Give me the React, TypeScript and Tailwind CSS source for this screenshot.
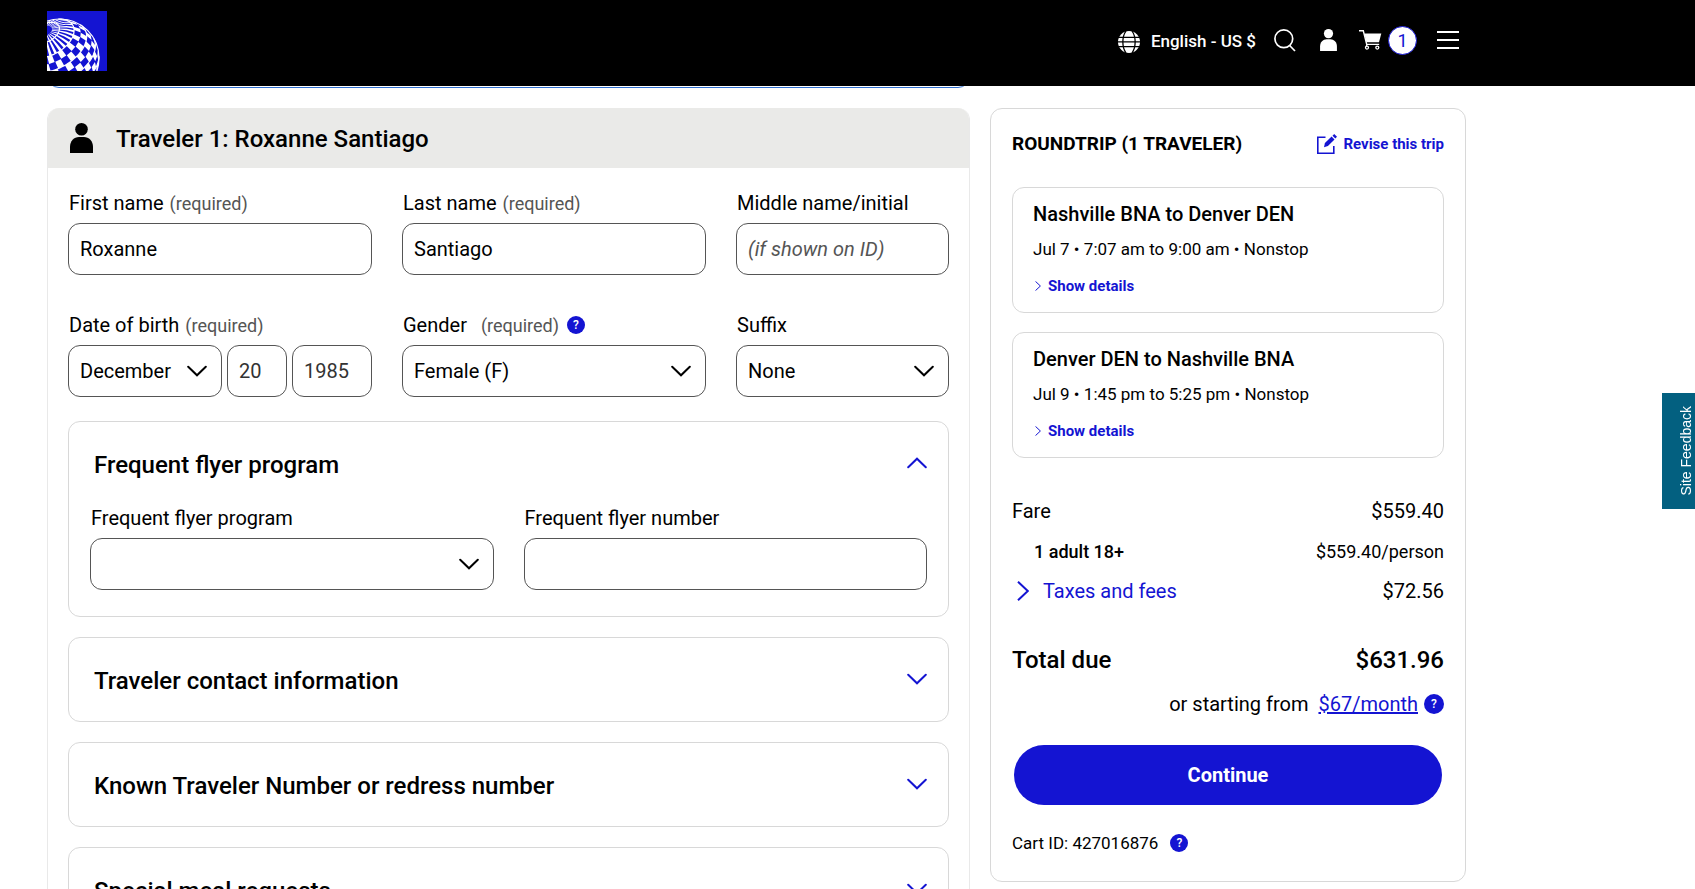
import * as React from "react";

/* ---------- Logo ---------- */

const GLOBE = { cx: 13, cy: 47, r: 39 };
const POLE_TILT = (53 * Math.PI) / 180;
const POLE_AZIMUTH = Math.atan2(-27, -15);
const BAND = 22;
const STEP = 24;

// Orthographic projection of a point given by its distance from the pole and its longitude
function project(colat: number, lon: number) {
  const c = (colat * Math.PI) / 180;
  const l = (lon * Math.PI) / 180;
  const a = Math.sin(c) * Math.cos(l);
  const b = Math.sin(c) * Math.sin(l);
  const n = Math.cos(c);
  const along = n * Math.sin(POLE_TILT) + a * Math.cos(POLE_TILT);
  const depth = n * Math.cos(POLE_TILT) - a * Math.sin(POLE_TILT);
  const x = GLOBE.cx + GLOBE.r * (along * Math.cos(POLE_AZIMUTH) - b * Math.sin(POLE_AZIMUTH));
  const y = GLOBE.cy + GLOBE.r * (along * Math.sin(POLE_AZIMUTH) + b * Math.cos(POLE_AZIMUTH));
  return { x, y, depth };
}

function buildCells() {
  let d = "";
  for (let row = 1; row < 12; row++) {
    const top = (row * BAND) / 2;
    const bottom = top + BAND / 2;
    // Rows close to the pole are made of narrow bars, the others alternate
    const step = row < 4 ? STEP / 2 : STEP;
    const width = row < 4 ? step / 2 : step * 0.45;
    for (let lon = 0; lon < 360; lon += step) {
      const start = lon + (row > 3 && row % 2 ? step / 2 : 0);
      const corners = [
        project(top, start),
        project(top, start + width),
        project(bottom, start + width),
        project(bottom, start),
      ];
      if (corners.some((p) => p.depth < 0)) continue;
      d += "M" + corners.map((p) => `${p.x.toFixed(2)} ${p.y.toFixed(2)}`).join("L") + "Z";
    }
  }
  return d;
}

function buildParallels() {
  let d = "";
  for (let colat = BAND; colat < 140; colat += BAND) {
    let pen = false;
    for (let lon = 0; lon <= 360; lon += 4) {
      const p = project(colat, lon);
      if (p.depth < 0) {
        pen = false;
        continue;
      }
      d += `${pen ? "L" : "M"}${p.x.toFixed(2)} ${p.y.toFixed(2)}`;
      pen = true;
    }
  }
  return d;
}

const CELLS = buildCells();
const PARALLELS = buildParallels();

function Logo() {
  return (
    <svg viewBox="0 0 60 60" className="size-[60px]" aria-label="Home">
      <rect width="60" height="60" fill="#1414d2" />
      <circle cx={GLOBE.cx} cy={GLOBE.cy} r={GLOBE.r} fill="none" stroke="#fff" strokeWidth="1.2" />
      <path d={CELLS} fill="#fff" />
      <path d={PARALLELS} fill="none" stroke="#fff" strokeWidth="1.2" />
    </svg>
  );
}

/* ---------- Icons ---------- */

function PersonIcon({ className }: { className: string }) {
  return (
    <svg viewBox="0 0 23 30" className={className} fill="currentColor" aria-hidden="true">
      <circle cx="11.5" cy="6.3" r="6.3" />
      <path d="M0 30V24C0 18 4 14 9 14h5c5 0 9 4 9 10v6z" />
    </svg>
  );
}

function GlobeIcon() {
  return (
    <svg viewBox="0 0 22 22" className="size-[22px]" aria-hidden="true">
      <circle cx="11" cy="11" r="11" fill="#fff" />
      <g fill="none" stroke="#000" strokeWidth="1.3">
        <path d="M0 6.3h22M0 10.9h22M0 15.6h22" />
        <path d="M8 0C3.8 6 3.8 16 8 22M14 0c4.200 6 4.200 16 0 22" />
      </g>
    </svg>
  );
}

function SearchIcon() {
  return (
    <svg viewBox="0 0 22 23" className="h-[23px] w-[22px]" fill="none" stroke="#fff" strokeWidth="1.700" aria-hidden="true">
      <circle cx="9.800" cy="9.800" r="8.900" />
      <path d="M15.600 16.500l5.400 5.500" />
    </svg>
  );
}

function CartIcon() {
  return (
    <svg viewBox="0 0 23 20" className="h-5 w-[23px]" fill="none" stroke="#fff" aria-hidden="true">
      <path d="M0 .8h4.300l3.400 13.600h12.500" strokeWidth="1.400" />
      <path d="M5.300 3.500h17l-2.300 8.700H7.400z" fill="#fff" stroke="none" />
      <path d="M8 14.500l-.8 2" strokeWidth="1.200" />
      <circle cx="8" cy="17.600" r="1.500" strokeWidth="1.300" />
      <circle cx="18.300" cy="17.600" r="1.500" strokeWidth="1.300" />
    </svg>
  );
}

function EditIcon() {
  return (
    <svg viewBox="0 0 20 20" className="size-5" fill="none" stroke="currentColor" aria-hidden="true">
      <path d="M8.500 3.300H.8v15.900h16v-7.300" strokeWidth="1.600" />
      <path d="M7 13.200l.9-4.100 6.700-6.500 2.900 2.900-6.600 6.600z" fill="currentColor" stroke="none" />
      <path d="M15.500 1.700L17.200 0 20 2.800l-1.700 1.700z" fill="currentColor" stroke="none" />
    </svg>
  );
}

function Chevron({ up = false, className }: { up?: boolean; className: string }) {
  return (
    <svg viewBox="0 0 20 12" className={className} fill="none" stroke="currentColor" strokeWidth="2" strokeLinecap="round" aria-hidden="true">
      <path d={up ? "M1.200 10.300L10 1.700l8.800 8.600" : "M1.200 1.700L10 10.300l8.800-8.600"} />
    </svg>
  );
}

function ChevronRight({ className }: { className: string }) {
  return (
    <svg viewBox="0 0 12 20" className={className} fill="none" stroke="currentColor" strokeWidth="2" aria-hidden="true">
      <path d="M1 .8L10.800 10 1 19.200" />
    </svg>
  );
}

function HelpButton({ label, large = false }: { label: string; large?: boolean }) {
  return (
    <button
      type="button"
      aria-label={label}
      className={`flex shrink-0 items-center justify-center rounded-full bg-[#1414d2] text-[12px] leading-none font-medium text-white ${
        large ? "size-5" : "size-[18px]"
      }`}
    >
      ?
    </button>
  );
}

/* ---------- Form parts ---------- */

const controlClass =
  "h-[52px] w-full min-w-0 appearance-none rounded-xl border border-[#555] bg-white px-[11px] text-[20px] outline-none placeholder:text-[#555] placeholder:italic";

interface FieldProps {
  id: string;
  label: string;
  required?: boolean;
  help?: string;
  children: React.ReactNode;
}

function Field({ id, label, required, help, children }: FieldProps) {
  return (
    <div className="min-w-0">
      <div className="mb-[5px] flex h-[30px] items-center gap-2 pl-px">
        <label htmlFor={id} className="text-[20px]">
          {label}
          {required && (
            <span className={`text-[18px] text-[#555] ${help ? "ml-[14px]" : "ml-[6px]"}`}>(required)</span>
          )}
        </label>
        {help && <HelpButton label={help} />}
      </div>
      {children}
    </div>
  );
}

function Select({ id, value }: { id: string; value: string }) {
  return (
    <div className="relative min-w-0">
      <select id={id} defaultValue={value} className={controlClass}>
        <option value={value}>{value}</option>
      </select>
      <Chevron className="pointer-events-none absolute top-5 right-[15px] h-3 w-5" />
    </div>
  );
}

interface SectionProps {
  title: string;
  children?: React.ReactNode;
}

function Section({ title, children }: SectionProps) {
  const open = Boolean(children);
  return (
    <section className="rounded-xl border border-[#d8d8d8]">
      <h3>
        <button
          type="button"
          aria-expanded={open}
          className={`flex w-full items-center justify-between pt-[26px] pr-[21px] pl-[25px] text-left text-[24px] leading-[35px] font-medium ${
            open ? "pb-5" : "pb-[22px]"
          }`}
        >
          {title}
          <Chevron up={open} className="mb-[6px] h-3 w-5 text-[#1414d2]" />
        </button>
      </h3>
      {children}
    </section>
  );
}

/* ---------- Trip summary ---------- */

const flights = [
  { route: "Nashville BNA to Denver DEN", info: "Jul 7 • 7:07 am to 9:00 am • Nonstop" },
  { route: "Denver DEN to Nashville BNA", info: "Jul 9 • 1:45 pm to 5:25 pm • Nonstop" },
];

function TripSummary() {
  return (
    <aside className="rounded-xl border border-[#d8d8d8] px-[21px] pt-[21px] pb-[26px]">
      <div className="flex items-center justify-between leading-7">
        <h2 className="text-[19px] font-bold">ROUNDTRIP (1 TRAVELER)</h2>
        <a href="#revise" className="flex items-center gap-[6px] text-[15px] font-bold text-[#1414d2]">
          <EditIcon />
          Revise this trip
        </a>
      </div>

      <div className="mt-[29px] flex flex-col gap-[19px]">
        {flights.map((flight) => (
          <section key={flight.route} className="rounded-xl border border-[#d8d8d8] px-5 pt-3 pb-[14px]">
            <h3 className="text-[20px] leading-7 font-medium">{flight.route}</h3>
            <p className="mt-[9px] text-[17px] leading-6">{flight.info}</p>
            <button type="button" className="mt-[13px] flex items-center gap-[7px] pl-[2px] text-[15px] leading-6 font-bold text-[#1414d2]">
              <ChevronRight className="h-[10px] w-[6px]" />
              Show details
            </button>
          </section>
        ))}
      </div>

      <div className="mt-[39px] flex justify-between text-[20px] leading-7">
        <span>Fare</span>
        <span>$559.40</span>
      </div>
      <div className="mt-[15px] flex justify-between pl-[22px] text-[18px] leading-6">
        <span className="font-medium">1 adult 18+</span>
        <span>$559.40/person</span>
      </div>
      <div className="mt-[13px] flex justify-between text-[20px] leading-7">
        <button type="button" className="flex items-center gap-[14px] pl-[5px] text-[#1414d2]">
          <ChevronRight className="h-5 w-3" />
          Taxes and fees
        </button>
        <span>$72.56</span>
      </div>
      <div className="mt-[37px] flex justify-between text-[24px] leading-9 font-medium">
        <span>Total due</span>
        <span>$631.96</span>
      </div>
      <div className="mt-3 flex items-center justify-end text-[20px] leading-7">
        <span>or starting from</span>
        <a href="#monthly" className="mr-[6px] ml-[10px] text-[#1414d2] underline">
          $67/month
        </a>
        <HelpButton label="About monthly payments" large />
      </div>

      <div className="mt-[27px] px-[2px]">
        <button type="button" className="h-[60px] w-full rounded-full bg-[#1414d2] text-[20px] font-bold text-white">
          Continue
        </button>
      </div>

      <div className="mt-[26px] flex items-center gap-3 text-[17px] leading-6">
        <span>Cart ID: 427016876</span>
        <HelpButton label="About the cart ID" />
      </div>
    </aside>
  );
}

/* ---------- Page ---------- */

function Header() {
  return (
    <header className="bg-black text-white">
      <div className="flex h-[86px] max-w-[1506px] items-center justify-between px-[47px] pb-1">
        <a href="#home">
          <Logo />
        </a>
        <nav className="flex items-center pb-[2px]">
          <button type="button" className="flex items-center gap-[11px] pt-[3px] text-[17px] font-medium">
            <GlobeIcon />
            English - US $
          </button>
          <button type="button" aria-label="Search" className="ml-[18px]">
            <SearchIcon />
          </button>
          <button type="button" aria-label="Account" className="ml-6">
            <PersonIcon className="h-[22px] w-[17px]" />
          </button>
          <button type="button" aria-label="Cart" className="ml-[22px] flex items-center gap-[6px]">
            <CartIcon />
            <span className="flex size-[29px] items-center justify-center rounded-full border border-[#1414d2] bg-white text-[18px] text-[#1414d2]">
              1
            </span>
          </button>
          <button type="button" aria-label="Menu" className="ml-5 flex w-[22px] flex-col gap-[6px]">
            <span className="h-[2px] bg-white" />
            <span className="h-[2px] bg-white" />
            <span className="h-[2px] bg-white" />
          </button>
        </nav>
      </div>
    </header>
  );
}

export default function App() {
  return (
    <div className="h-screen overflow-hidden bg-white font-['Roboto',sans-serif] text-black">
      <Header />

      <main className="grid max-w-[1513px] grid-cols-[923fr_476fr] items-start gap-5 px-[47px]">
        <div>
          {/* Bottom edge of the notice above the form */}
          <div className="flex h-[2px] items-end overflow-hidden">
            <div className="h-8 w-full shrink-0 rounded-xl border border-[#2f6fd0]" />
          </div>

          <form className="mt-5 overflow-hidden rounded-t-xl border-x border-[#e9e9e9]">
            <div className="-mx-px flex h-[60px] items-center gap-[23px] bg-[#eaeae8] pl-[23px]">
              <PersonIcon className="h-[30px] w-[23px]" />
              <h2 className="pt-[2px] text-[24px] font-medium">Traveler 1: Roxanne Santiago</h2>
            </div>

            <div className="px-5 pt-5">
              <div className="grid grid-cols-[304fr_304fr_213fr] gap-x-[30px] gap-y-[35px]">
                <Field id="first" label="First name" required>
                  <input id="first" className={controlClass} defaultValue="Roxanne" />
                </Field>
                <Field id="last" label="Last name" required>
                  <input id="last" className={controlClass} defaultValue="Santiago" />
                </Field>
                <Field id="middle" label="Middle name/initial">
                  <input id="middle" className={controlClass} placeholder="(if shown on ID)" />
                </Field>
                <Field id="month" label="Date of birth" required>
                  <div className="grid grid-cols-[154fr_60fr_80fr] gap-[5px]">
                    <Select id="month" value="December" />
                    <input aria-label="Day" className={`${controlClass} text-[#333]`} defaultValue="20" />
                    <input aria-label="Year" className={`${controlClass} text-[#333]`} defaultValue="1985" />
                  </div>
                </Field>
                <Field id="gender" label="Gender" required help="About gender">
                  <Select id="gender" value="Female (F)" />
                </Field>
                <Field id="suffix" label="Suffix">
                  <Select id="suffix" value="None" />
                </Field>
              </div>

              <div className="mt-6 flex flex-col gap-5">
                <Section title="Frequent flyer program">
                  <div className="grid grid-cols-2 gap-[30px] px-[21px] pb-[26px]">
                    <Field id="program" label="Frequent flyer program">
                      <Select id="program" value="" />
                    </Field>
                    <Field id="number" label="Frequent flyer number">
                      <input id="number" className={controlClass} />
                    </Field>
                  </div>
                </Section>
                <Section title="Traveler contact information" />
                <Section title="Known Traveler Number or redress number" />
                <Section title="Special meal requests" />
              </div>
            </div>
          </form>
        </div>

        <div className="pt-[22px]">
          <TripSummary />
        </div>
      </main>

      <button
        type="button"
        className="fixed top-[393px] right-0 flex h-[116px] w-[33px] items-center justify-center bg-[#036080] pl-[15px] font-['Liberation_Sans',sans-serif] text-[14px] text-white"
      >
        <span className="rotate-180 [writing-mode:vertical-rl]">Site Feedback</span>
      </button>
    </div>
  );
}
